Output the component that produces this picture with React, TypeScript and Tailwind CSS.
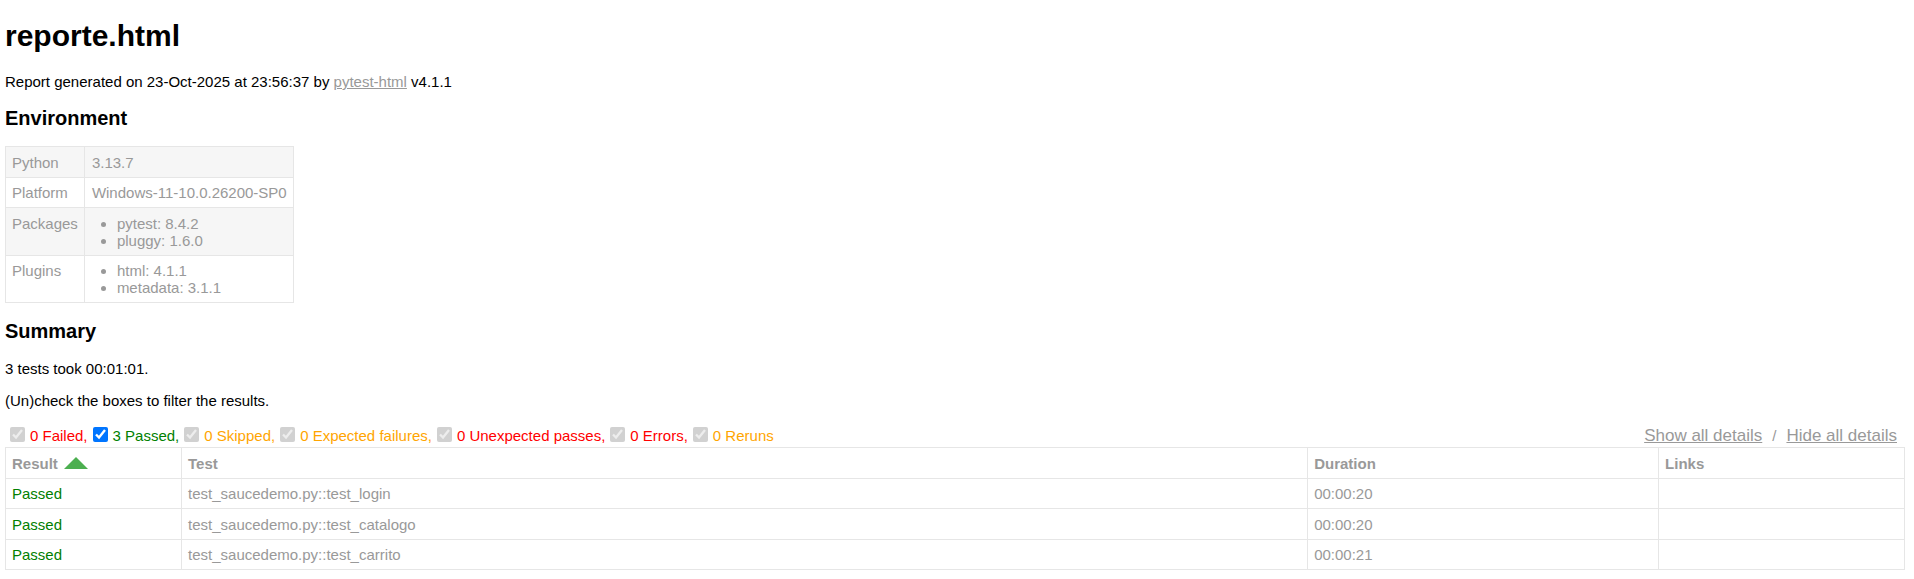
import { useState } from "react";

const environment: { name: string; value: string | string[] }[] = [
  { name: "Python", value: "3.13.7" },
  { name: "Platform", value: "Windows-11-10.0.26200-SP0" },
  { name: "Packages", value: ["pytest: 8.4.2", "pluggy: 1.6.0"] },
  { name: "Plugins", value: ["html: 4.1.1", "metadata: 3.1.1"] },
];

const filters = [
  { id: "failed", label: "0 Failed,", color: "text-[#ff0000]", enabled: false },
  { id: "passed", label: "3 Passed,", color: "text-[#008000]", enabled: true },
  { id: "skipped", label: "0 Skipped,", color: "text-[#ffa500]", enabled: false },
  { id: "xfailed", label: "0 Expected failures,", color: "text-[#ffa500]", enabled: false },
  { id: "xpassed", label: "0 Unexpected passes,", color: "text-[#ff0000]", enabled: false },
  { id: "error", label: "0 Errors,", color: "text-[#ff0000]", enabled: false },
  { id: "rerun", label: "0 Reruns", color: "text-[#ffa500]", enabled: false },
];

const results = [
  { test: "test_saucedemo.py::test_login", duration: "00:00:20" },
  { test: "test_saucedemo.py::test_catalogo", duration: "00:00:20" },
  { test: "test_saucedemo.py::test_carrito", duration: "00:00:21" },
];

function Environment() {
  return (
    <table className="mt-4 border-collapse text-[#999999]">
      <tbody>
        {environment.map(({ name, value }) => (
          <tr key={name} className="odd:bg-[#f6f6f6] odd:*:pt-[7px]">
            <th scope="row" className="border border-[#e6e6e6] p-1.5 text-left align-top font-normal">
              {name}
            </th>
            <td className="border border-[#e6e6e6] p-1.5 pl-[7px] align-top">
              {Array.isArray(value) ? (
                <ul className="list-disc pl-[25px]">
                  {value.map((item) => (
                    <li key={item}>{item}</li>
                  ))}
                </ul>
              ) : (
                value
              )}
            </td>
          </tr>
        ))}
      </tbody>
    </table>
  );
}

function Results({ visible }: { visible: boolean }) {
  return (
    <table className="w-full table-fixed border-collapse text-[#999999]">
      <colgroup>
        <col className="w-[9.27%]" />
        <col className="w-[59.3%]" />
        <col className="w-[18.48%]" />
        <col className="w-[12.95%]" />
      </colgroup>
      <thead>
        <tr className="text-left *:border *:border-[#e6e6e6] *:p-1.5 *:pt-[7px]">
          <th scope="col">
            <span className="flex items-start gap-1.5">
              Result
              <svg className="h-3.5 w-6" viewBox="0 0 24 14" aria-hidden="true">
                <path d="M12 2 24 14H0z" fill="#4caf50" />
              </svg>
            </span>
          </th>
          <th scope="col">Test</th>
          <th scope="col">Duration</th>
          <th scope="col">Links</th>
        </tr>
      </thead>
      <tbody>
        {visible &&
          results.map(({ test, duration }) => (
            <tr key={test} className="*:border *:border-[#e6e6e6] *:p-1.5 even:*:pt-[7px]">
              <td className="text-[#008000]">Passed</td>
              <td>{test}</td>
              <td>{duration}</td>
              <td />
            </tr>
          ))}
      </tbody>
    </table>
  );
}

export default function App() {
  const [showPassed, setShowPassed] = useState(true);

  return (
    <main className="bg-white pt-4 pr-[9px] pb-2 pl-[5px] font-['Liberation_Sans',Arial,sans-serif] text-[15px] leading-[17px] text-black">
      <h1 className="text-[30px] leading-10 font-bold">reporte.html</h1>
      <p className="mt-[17px]">
        Report generated on 23-Oct-2025 at 23:56:37 by{" "}
        <a href="https://pypi.python.org/pypi/pytest-html" className="text-[#999999] underline">
          pytest-html
        </a>{" "}
        v4.1.1
      </p>
      <section>
        <h2 className="mt-4 text-xl leading-6 font-bold">Environment</h2>
        <Environment />
      </section>
      <section>
        <h2 className="mt-4 text-xl leading-6 font-bold">Summary</h2>
        <p className="mt-[17px]">3 tests took 00:01:01.</p>
        <p className="mt-[15px]">(Un)check the boxes to filter the results.</p>
        <div className="mt-[17px] flex items-start justify-between pb-[3px]">
          <div className="flex">
            {filters.map(({ id, label, color, enabled }) => (
              <span key={id} className="flex items-start">
                <input
                  id={id}
                  type="checkbox"
                  className="mx-[5px] mt-px size-[15px]"
                  disabled={!enabled}
                  checked={enabled ? showPassed : true}
                  onChange={(event) => setShowPassed(event.target.checked)}
                />
                <label htmlFor={id} className={`pt-px ${color}`}>
                  {label}
                </label>
              </span>
            ))}
          </div>
          <div className="flex gap-2.5 pr-2 text-[#999999]">
            <button type="button" className="text-[17px] leading-[17px] underline">
              Show all details
            </button>
            <span className="pt-px">/</span>
            <button type="button" className="text-[17px] leading-[17px] underline">
              Hide all details
            </button>
          </div>
        </div>
        <Results visible={showPassed} />
      </section>
    </main>
  );
}
